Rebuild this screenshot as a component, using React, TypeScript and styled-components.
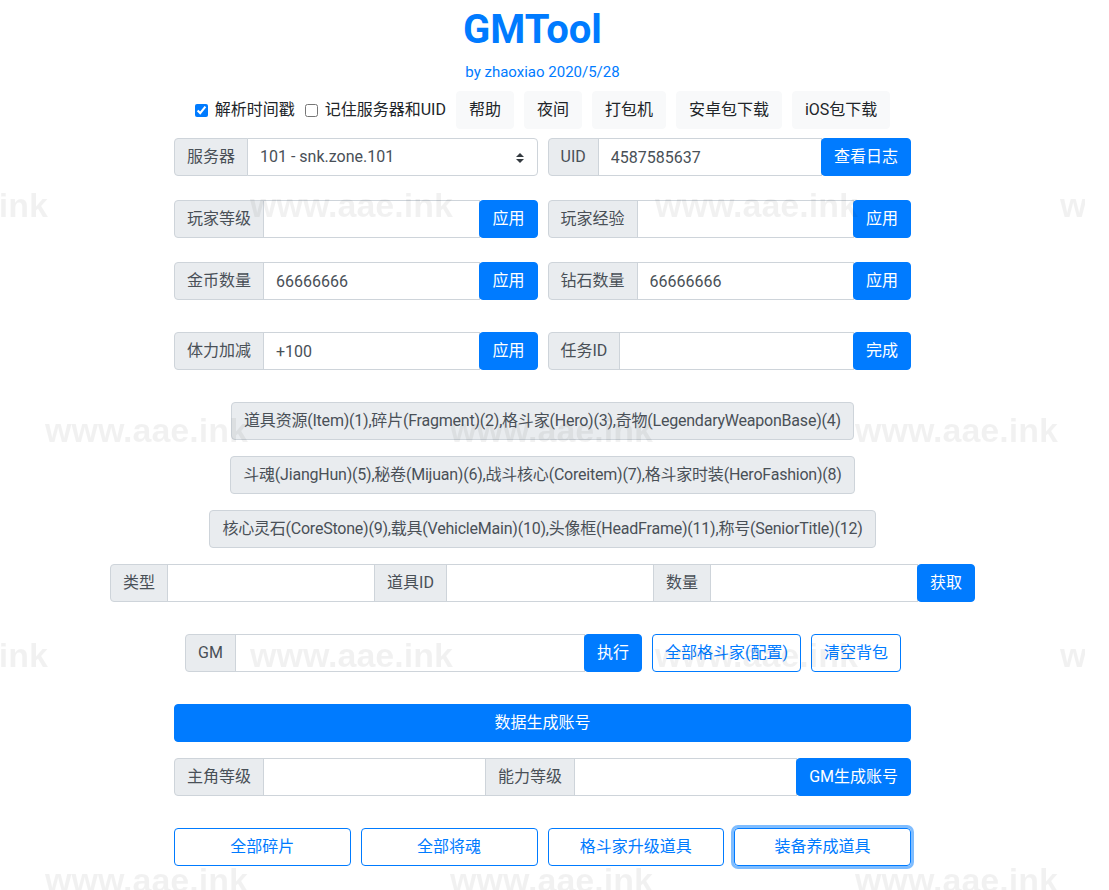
import React from 'react';
import styled, { createGlobalStyle, css } from 'styled-components';

const GlobalStyle = createGlobalStyle`
  * { box-sizing: border-box; }
  html, body {
    margin: 0;
    padding: 0;
    background: #fff;
  }
  body {
    font-family: Roboto, "Noto Sans CJK SC", sans-serif;
    font-size: 16px;
    line-height: 1.5;
    color: #212529;
  }
`;

const Page = styled.div`
  position: relative;
  width: 1085px;
  min-height: 890px;
  padding-top: 6px;
  overflow: hidden;
`;

const Title = styled.h1`
  margin: 0 20px 0 0;
  text-align: center;
  font-size: 40px;
  line-height: 48px;
  font-weight: 700;
  color: #007bff;
`;

const Subtitle = styled.div`
  margin-top: 6px;
  text-align: center;
  font-size: 15px;
  line-height: 24px;
  color: #007bff;
`;

const Nav = styled.div`
  margin-top: 7px;
  display: flex;
  justify-content: center;
  align-items: center;
  gap: 10px;
`;

const CheckLabel = styled.label`
  display: flex;
  align-items: center;
  gap: 4px;
  color: #212529;
  white-space: nowrap;
`;

const Checkbox = styled.input.attrs({ type: 'checkbox' })`
  width: 13px;
  height: 13px;
  margin: 0 3px 0 0;
  accent-color: #007bff;
`;

const baseButton = css`
  font-family: inherit;
  font-size: 16px;
  line-height: 24px;
  height: 38px;
  padding: 6px 12px;
  border-radius: 4px;
  white-space: nowrap;
  cursor: pointer;
`;

const LightButton = styled.button`
  ${baseButton};
  background: #f8f9fa;
  border: 1px solid #f8f9fa;
  color: #212529;
`;

const Section = styled.div<{ $mt: number; $width?: number }>`
  margin: ${({ $mt }) => $mt}px auto 0;
  width: ${({ $width }) => ($width ? `${$width}px` : '737px')};
`;

const TwoCol = styled.div`
  display: grid;
  grid-template-columns: minmax(0, 1fr) minmax(0, 1fr);
  gap: 10px;
`;

const InputGroup = styled.div<{ $width?: number }>`
  display: flex;
  align-items: stretch;
  height: 38px;
  min-width: 0;
  ${({ $width }) => ($width ? `width: ${$width}px; flex: none;` : '')}

  & > * {
    border-radius: 0;
  }
  & > * + * {
    margin-left: -1px;
  }
  & > *:first-child {
    border-top-left-radius: 4px;
    border-bottom-left-radius: 4px;
  }
  & > *:last-child {
    border-top-right-radius: 4px;
    border-bottom-right-radius: 4px;
  }
`;

const Addon = styled.span`
  display: flex;
  align-items: center;
  padding: 6px 12px;
  background: #e9ecef;
  border: 1px solid #ced4da;
  color: #495057;
  white-space: nowrap;
  flex: none;
`;

const Field = styled.input`
  flex: 1;
  min-width: 0;
  width: 0;
  height: 38px;
  padding: 6px 12px;
  border: 1px solid #ced4da;
  background: #fff;
  color: #495057;
  font-family: inherit;
  font-size: 16px;
  line-height: 24px;
  outline: none;
`;

const SelectBox = styled.div`
  position: relative;
  flex: 1;
  min-width: 0;
  display: flex;
  align-items: center;
  padding: 6px 30px 6px 12px;
  border: 1px solid #ced4da;
  background: #fff;
  color: #495057;
  white-space: nowrap;
`;

const SelectArrow = styled.svg`
  position: absolute;
  right: 13px;
  top: 14px;
`;

const PrimaryButton = styled.button`
  ${baseButton};
  flex: none;
  background: #007bff;
  border: 1px solid #007bff;
  color: #fff;
`;

const CategoryRow = styled.div<{ $mt: number }>`
  margin-top: ${({ $mt }) => $mt}px;
  display: flex;
  justify-content: center;
`;

const CategoryButton = styled.button`
  ${baseButton};
  background: #e9ecef;
  border: 1px solid #ced4da;
  color: #495057;
  letter-spacing: -0.22px;
`;

const ActionRow = styled.div`
  display: flex;
  align-items: center;
  gap: 10px;
`;

const OutlineButton = styled.button<{ $focused?: boolean }>`
  ${baseButton};
  background: transparent;
  border: 1px solid #007bff;
  color: #007bff;
  ${({ $focused }) =>
    $focused && 'box-shadow: 0 0 0 3px rgba(0, 123, 255, 0.5);'}
`;

const BlockButton = styled(PrimaryButton)`
  width: 100%;
`;

const ButtonGrid = styled.div`
  display: grid;
  grid-template-columns: repeat(4, minmax(0, 1fr));
  gap: 10px;
`;

const Watermark = styled.div`
  position: absolute;
  inset: 0;
  pointer-events: none;
  display: flex;
  flex-direction: column;
  gap: 185px;
  padding-top: 185px;
  overflow: hidden;
`;

const MarkRow = styled.div<{ $shift: number }>`
  display: flex;
  margin-left: ${({ $shift }) => $shift}px;
  height: 40px;
`;

const Mark = styled.span`
  flex: none;
  width: 405px;
  font-family: "Liberation Sans", Arial, sans-serif;
  font-weight: 700;
  font-size: 34px;
  line-height: 40px;
  color: rgba(0, 0, 0, 0.055);
  filter: blur(0.5px);
  white-space: nowrap;
`;

const markRows = [-155, 45, -155, 45];

function SelectArrows() {
  return (
    <SelectArrow width="8" height="10" viewBox="0 0 4 5">
      <path d="M2 0L0 2h4zm0 5L0 3h4z" fill="#343a40" />
    </SelectArrow>
  );
}

export default function App() {
  return (
    <>
      <GlobalStyle />
      <Page>
        <Title>GMTool</Title>
        <Subtitle>by zhaoxiao 2020/5/28</Subtitle>

        <Nav>
          <CheckLabel>
            <Checkbox defaultChecked />
            解析时间戳
          </CheckLabel>
          <CheckLabel>
            <Checkbox />
            记住服务器和UID
          </CheckLabel>
          <LightButton>帮助</LightButton>
          <LightButton>夜间</LightButton>
          <LightButton>打包机</LightButton>
          <LightButton>安卓包下载</LightButton>
          <LightButton>iOS包下载</LightButton>
        </Nav>

        <Section $mt={9}>
          <TwoCol>
            <InputGroup>
              <Addon>服务器</Addon>
              <SelectBox>
                101 - snk.zone.101
                <SelectArrows />
              </SelectBox>
            </InputGroup>
            <InputGroup>
              <Addon>UID</Addon>
              <Field defaultValue="4587585637" />
              <PrimaryButton>查看日志</PrimaryButton>
            </InputGroup>
          </TwoCol>
        </Section>

        <Section $mt={24}>
          <TwoCol>
            <InputGroup>
              <Addon>玩家等级</Addon>
              <Field />
              <PrimaryButton>应用</PrimaryButton>
            </InputGroup>
            <InputGroup>
              <Addon>玩家经验</Addon>
              <Field />
              <PrimaryButton>应用</PrimaryButton>
            </InputGroup>
          </TwoCol>
        </Section>

        <Section $mt={24}>
          <TwoCol>
            <InputGroup>
              <Addon>金币数量</Addon>
              <Field defaultValue="66666666" />
              <PrimaryButton>应用</PrimaryButton>
            </InputGroup>
            <InputGroup>
              <Addon>钻石数量</Addon>
              <Field defaultValue="66666666" />
              <PrimaryButton>应用</PrimaryButton>
            </InputGroup>
          </TwoCol>
        </Section>

        <Section $mt={32}>
          <TwoCol>
            <InputGroup>
              <Addon>体力加减</Addon>
              <Field defaultValue="+100" />
              <PrimaryButton>应用</PrimaryButton>
            </InputGroup>
            <InputGroup>
              <Addon>任务ID</Addon>
              <Field />
              <PrimaryButton>完成</PrimaryButton>
            </InputGroup>
          </TwoCol>
        </Section>

        <CategoryRow $mt={32}>
          <CategoryButton>
            道具资源(Item)(1),碎片(Fragment)(2),格斗家(Hero)(3),奇物(LegendaryWeaponBase)(4)
          </CategoryButton>
        </CategoryRow>
        <CategoryRow $mt={16}>
          <CategoryButton>
            斗魂(JiangHun)(5),秘卷(Mijuan)(6),战斗核心(Coreitem)(7),格斗家时装(HeroFashion)(8)
          </CategoryButton>
        </CategoryRow>
        <CategoryRow $mt={16}>
          <CategoryButton>
            核心灵石(CoreStone)(9),载具(VehicleMain)(10),头像框(HeadFrame)(11),称号(SeniorTitle)(12)
          </CategoryButton>
        </CategoryRow>

        <Section $mt={16} $width={865}>
          <InputGroup>
            <Addon>类型</Addon>
            <Field />
            <Addon>道具ID</Addon>
            <Field />
            <Addon>数量</Addon>
            <Field />
            <PrimaryButton>获取</PrimaryButton>
          </InputGroup>
        </Section>

        <Section $mt={32} $width={715}>
          <ActionRow>
            <InputGroup $width={457}>
              <Addon>GM</Addon>
              <Field />
              <PrimaryButton>执行</PrimaryButton>
            </InputGroup>
            <OutlineButton>全部格斗家(配置)</OutlineButton>
            <OutlineButton>清空背包</OutlineButton>
          </ActionRow>
        </Section>

        <Section $mt={32}>
          <BlockButton>数据生成账号</BlockButton>
        </Section>

        <Section $mt={16}>
          <InputGroup>
            <Addon>主角等级</Addon>
            <Field />
            <Addon>能力等级</Addon>
            <Field />
            <PrimaryButton>GM生成账号</PrimaryButton>
          </InputGroup>
        </Section>

        <Section $mt={32}>
          <ButtonGrid>
            <OutlineButton>全部碎片</OutlineButton>
            <OutlineButton>全部将魂</OutlineButton>
            <OutlineButton>格斗家升级道具</OutlineButton>
            <OutlineButton $focused>装备养成道具</OutlineButton>
          </ButtonGrid>
        </Section>

        <Watermark>
          {markRows.map((shift, i) => (
            <MarkRow key={i} $shift={shift}>
              {[0, 1, 2, 3].map((j) => (
                <Mark key={j}>www.aae.ink</Mark>
              ))}
            </MarkRow>
          ))}
        </Watermark>
      </Page>
    </>
  );
}
